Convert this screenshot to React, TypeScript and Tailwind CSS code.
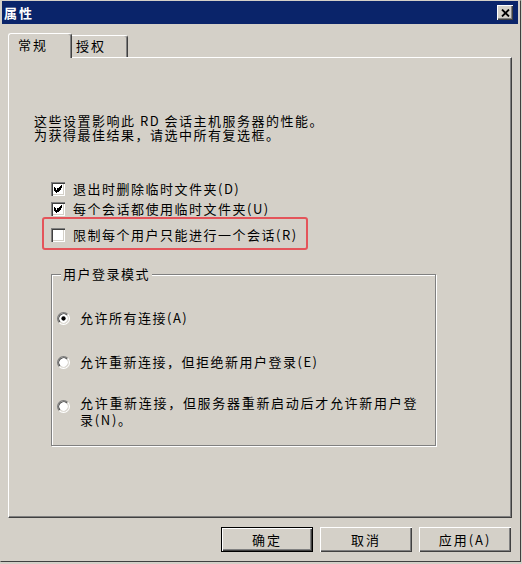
import React from "react";

function CheckBox({ checked = false }: { checked?: boolean }) {
  return (
    <span className="flex h-[14px] w-[14px] shrink-0 items-center justify-center bg-white shadow-[inset_1px_1px_0_#808080,inset_2px_2px_0_#404040,inset_-1px_-1px_0_#ffffff,inset_-2px_-2px_0_#d4d0c8]">
      {checked && (
        <svg width="8" height="8" viewBox="0 0 7 7" shapeRendering="crispEdges">
          {[2, 3, 4, 3, 2, 1, 0].map((y, x) => (
            <rect key={x} x={x} y={y} width="1" height="3" fill="#000" />
          ))}
        </svg>
      )}
    </span>
  );
}

function Radio({ checked = false }: { checked?: boolean }) {
  return (
    <svg width="13" height="13" viewBox="0 0 12 12" className="shrink-0">
      <circle cx="6" cy="6" r="5" fill="#fff" />
      <path d="M2.11 9.89A5.5 5.5 0 0 1 9.89 2.11" fill="none" stroke="#808080" />
      <path d="M2.82 9.18A4.5 4.5 0 0 1 9.18 2.82" fill="none" stroke="#404040" />
      <path d="M9.89 2.11A5.5 5.5 0 0 1 2.11 9.89" fill="none" stroke="#ffffff" />
      <path d="M9.18 2.82A4.5 4.5 0 0 1 2.82 9.18" fill="none" stroke="#d4d0c8" />
      {checked && <circle cx="6" cy="6" r="2" fill="#000" />}
    </svg>
  );
}

function Btn({ label, primary = false }: { label: string; primary?: boolean }) {
  return (
    <button
      className={
        primary
          ? "flex h-[25px] w-[92px] items-center justify-center border border-black bg-[#d4d0c8] tracking-[2px] shadow-[inset_1px_1px_0_#ffffff,inset_-1px_-1px_0_#404040,inset_-2px_-2px_0_#808080]"
          : "flex h-[25px] w-[92px] items-center justify-center bg-[#d4d0c8] tracking-[2px] shadow-[inset_1px_1px_0_#ffffff,inset_-1px_-1px_0_#404040,inset_-2px_-2px_0_#808080]"
      }
    >
      {label}
    </button>
  );
}

export default function App() {
  return (
    <div className="h-[564px] w-[522px] bg-[#d4d0c8] font-['Noto_Sans_CJK_SC','Noto_Sans',sans-serif] text-[13px] text-black">
      <div className="flex h-[562px] w-[521px] flex-col border border-t-[#d4d0c8] border-l-[#d4d0c8] border-r-[#404040] border-b-[#404040] pl-[1px] pr-[2px]">
        {/* title bar */}
        <div className="flex h-[23px] items-center justify-between bg-[#0a246a] pl-[2px] pr-[5px]">
          <span className="text-[13px] leading-[16px] font-bold tracking-[2px] text-white">属性</span>
          <span className="flex h-[15px] w-[16px] items-center justify-center bg-[#d4d0c8] shadow-[inset_1px_1px_0_#ffffff,inset_-1px_-1px_0_#404040,inset_-2px_-2px_0_#808080]">
            <svg width="9" height="8" viewBox="0 0 9 8">
              <path d="M1 0.5L8 7.5M8 0.5L1 7.5" stroke="#000" strokeWidth="1.8" />
            </svg>
          </span>
        </div>

        {/* tabs */}
        <div className="mt-[9px] ml-[6px] flex h-[24px] items-end leading-[16px] tracking-[2px]">
          <div className="relative z-10 -mb-[1px] h-[25px] w-[64px] rounded-t-[3px] border-t border-l border-r border-t-white border-l-white border-r-[#404040] bg-[#d4d0c8] pt-[3px] pl-[9px] shadow-[inset_-1px_0_0_#808080]">
            常规
          </div>
          <div className="h-[22px] w-[56px] rounded-tr-[3px] border-t border-r border-t-white border-r-[#404040] pt-[2px] pl-[4px] shadow-[inset_-1px_0_0_#808080]">
            授权
          </div>
        </div>

        {/* tab panel */}
        <div className="ml-[6px] flex h-[461px] w-[504px] flex-col border border-t-white border-l-white border-r-[#404040] border-b-[#404040] tracking-[1.5px] shadow-[inset_-1px_-1px_0_#808080]">
          <p className="mt-[56px] ml-[25px] leading-[14px]">
            这些设置影响此 RD 会话主机服务器的性能。
            <br />
            为获得最佳结果，请选中所有复选框。
          </p>

          <div className="mt-[37px] ml-[42px] flex h-[20px] items-center gap-[8px]">
            <CheckBox checked />
            <span>退出时删除临时文件夹(D)</span>
          </div>
          <div className="ml-[42px] flex h-[20px] items-center gap-[8px]">
            <CheckBox checked />
            <span>每个会话都使用临时文件夹(U)</span>
          </div>
          <div className="-mt-[2px] ml-[33px] h-[33px] w-[266px] rounded-[3px] border-2 border-[#e4545a] pt-[6px] pl-[7px]">
            <div className="flex h-[20px] items-center gap-[8px]">
              <CheckBox />
              <span>限制每个用户只能进行一个会话(R)</span>
            </div>
          </div>

          {/* group box */}
          <div className="relative mt-[24px] ml-[42px] h-[172px] w-[385px] border border-[#808080] pt-[33px] pl-[5px] shadow-[inset_1px_1px_0_#ffffff,1px_1px_0_#ffffff]">
            <span className="absolute -top-[9px] left-[9px] bg-[#d4d0c8] px-[2px] leading-[16px]">
              用户登录模式
            </span>
            <div className="flex h-[20px] items-center gap-[10px]">
              <Radio checked />
              <span>允许所有连接(A)</span>
            </div>
            <div className="mt-[24px] flex h-[20px] items-center gap-[10px]">
              <Radio />
              <span>允许重新连接，但拒绝新用户登录(E)</span>
            </div>
            <div className="mt-[22px] flex items-start gap-[10px]">
              <span className="mt-[6px] flex">
                <Radio />
              </span>
              <span className="leading-[17px] tracking-[1.7px]">
                允许重新连接，但服务器重新启动后才允许新用户登
                <br />
                录(N)。
              </span>
            </div>
          </div>
        </div>

        {/* buttons */}
        <div className="mt-[9px] ml-[6px] flex w-[504px] justify-end gap-[7px] pr-[1px]">
          <Btn label="确定" primary />
          <Btn label="取消" />
          <Btn label="应用(A)" />
        </div>
      </div>
    </div>
  );
}
